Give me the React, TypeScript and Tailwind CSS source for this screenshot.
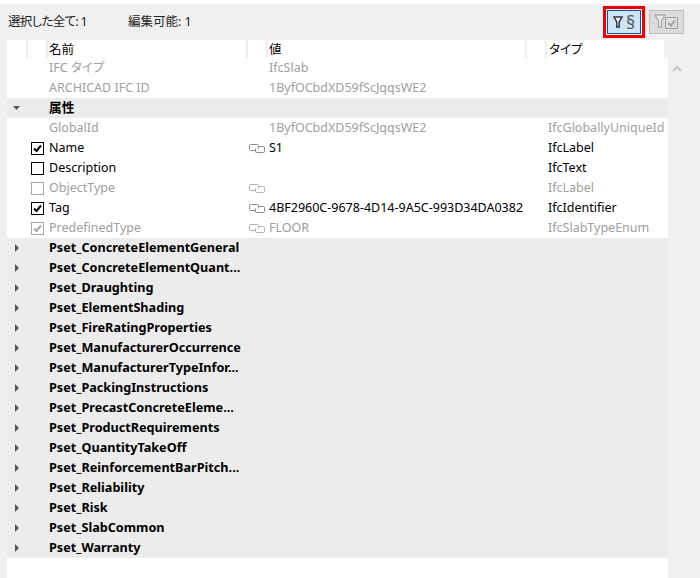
const font = "font-['Noto_Sans','Noto_Sans_CJK_JP',sans-serif]";

type Prop = {
  name: string;
  value?: string;
  type: string;
  dim?: boolean;
  check?: "on" | "off" | "none";
  link?: boolean;
};

const props: Prop[] = [
  { name: "GlobalId", value: "1ByfOCbdXD59fScJqqsWE2", type: "IfcGloballyUniqueId", dim: true },
  { name: "Name", value: "S1", type: "IfcLabel", check: "on", link: true },
  { name: "Description", type: "IfcText", check: "off" },
  { name: "ObjectType", type: "IfcLabel", check: "off", link: true, dim: true },
  { name: "Tag", value: "4BF2960C-9678-4D14-9A5C-993D34DA0382", type: "IfcIdentifier", check: "on", link: true },
  { name: "PredefinedType", value: "FLOOR", type: "IfcSlabTypeEnum", check: "on", link: true, dim: true },
];

const psets = [
  "Pset_ConcreteElementGeneral",
  "Pset_ConcreteElementQuant...",
  "Pset_Draughting",
  "Pset_ElementShading",
  "Pset_FireRatingProperties",
  "Pset_ManufacturerOccurrence",
  "Pset_ManufacturerTypeInfor...",
  "Pset_PackingInstructions",
  "Pset_PrecastConcreteEleme...",
  "Pset_ProductRequirements",
  "Pset_QuantityTakeOff",
  "Pset_ReinforcementBarPitch...",
  "Pset_Reliability",
  "Pset_Risk",
  "Pset_SlabCommon",
  "Pset_Warranty",
];

function LinkIcon({ dim }: { dim?: boolean }) {
  const c = dim ? "#b5b5b5" : "#8c8c8c";
  return (
    <svg width="16" height="9" viewBox="0 0 16 9" fill="none" stroke={c}>
      <path d="M6.5 6.5H1.5a1 1 0 0 1-1-1v-4a1 1 0 0 1 1-1h7a1 1 0 0 1 1 1v3" />
      <path d="M9.5 2.5h5a1 1 0 0 1 1 1v4a1 1 0 0 1-1 1h-7a1 1 0 0 1-1-1v-3" />
    </svg>
  );
}

function Check({ on, dim }: { on: boolean; dim?: boolean }) {
  const c = dim ? "#a8a8a8" : "#000000";
  return (
    <svg width="13" height="13" viewBox="0 0 13 13" fill="none">
      <rect x="0.5" y="0.5" width="12" height="12" stroke={c} fill="#fff" />
      {on && <path d="M3 6.5l2.5 2.5 4.5-5.5" stroke={c} strokeWidth="2" />}
    </svg>
  );
}

function Arrow({ open }: { open?: boolean }) {
  return (
    <svg width="8" height="8" viewBox="0 0 8 8" fill="#555">
      {open ? <path d="M0 2h7L3.5 6z" /> : <path d="M2 0v8l4-4z" />}
    </svg>
  );
}

function GroupRow({ label, open }: { label: string; open?: boolean }) {
  return (
    <div className="flex h-5 items-center bg-[#ececec]">
      <div className="flex w-[20px] justify-center">
        <Arrow open={open} />
      </div>
      <span className="mb-[2px] ml-[22px] text-[12.65px] font-bold text-black">{label}</span>
    </div>
  );
}

function InfoRow({ name, value }: { name: string; value: string }) {
  return (
    <div className="flex h-5 items-center text-[#a0a0a0]">
      <span className="ml-[42px] w-[220px]">{name}</span>
      <span>{value}</span>
    </div>
  );
}

function PropRow({ p }: { p: Prop }) {
  const text = p.dim ? "text-[#a0a0a0]" : "text-black";
  return (
    <div className={`flex h-5 items-center ${text}`}>
      <div className="flex w-[42px] justify-end pr-[5px]">
        {p.check && <Check on={p.check === "on"} dim={p.dim} />}
      </div>
      <span className="w-[200px]">{p.name}</span>
      <div className="flex w-[20px]">{p.link && <LinkIcon dim={p.dim} />}</div>
      <span className="w-[279px]">{p.value}</span>
      <span>{p.type}</span>
    </div>
  );
}

export default function App() {
  return (
    <div className={`h-[578px] w-[700px] overflow-hidden bg-white pt-1 text-[12.5px] leading-5 [font-feature-settings:'palt'] ${font}`}>
      <div className="h-full bg-[#f0f0f0]">
        <div className="flex h-9 items-center pl-2 pr-4 text-[#222]">
          <span className="w-[120px] tracking-[-0.7px]">選択した全て: 1</span>
          <span>編集可能: 1</span>
          <div className="ml-auto flex items-center gap-1">
            <div className="border-[3px] border-[#f00000] p-px">
              <div className="flex h-[24px] w-[34px] items-center justify-center gap-[3px] border border-[#0b5a94] bg-[#cce4f7]">
                <svg width="10" height="12" viewBox="0 0 10 12" fill="#fff" stroke="#333" strokeWidth="1.5">
                  <path d="M1 1h8L6.2 6v5H3.8V6z" />
                </svg>
                <span className="text-[18px] leading-none text-[#555]">§</span>
              </div>
            </div>
            <div className="flex h-[24px] w-[35px] items-center justify-center border border-[#bdbdbd] bg-[#dcdcdc]">
              <svg width="27" height="16" viewBox="0 0 27 16" fill="none">
                <path d="M2 1h10L8.5 7v6h-3V7z" fill="#eee" stroke="#aaa" strokeWidth="1.3" />
                <rect x="12.5" y="3.5" width="12" height="11" stroke="#a0a0a0" />
                <path d="M15.5 9l2.5 2.5 4-5" stroke="#a0a0a0" strokeWidth="2" />
              </svg>
            </div>
          </div>
        </div>
        <div className="flex">
          <div className="ml-[7px] w-[661px]">
            <div className="flex h-[18px] w-[657px] bg-white leading-5 text-black">
              <div className="w-[21px] border-r-2 border-[#eeeeee]" />
              <div className="w-[20px] border-r-2 border-[#eeeeee]" />
              <div className="w-[200px] border-r-2 border-[#eeeeee] pl-px">名前</div>
              <div className="w-[20px] border-r-2 border-[#eeeeee]" />
              <div className="w-[259px] border-r-2 border-[#eeeeee] pl-px">値</div>
              <div className="w-[20px] border-r-2 border-[#eeeeee]" />
              <div className="pl-[2px]">タイプ</div>
            </div>
            <div className="h-[520px] bg-white">
              <InfoRow name="IFC タイプ" value="IfcSlab" />
              <InfoRow name="ARCHICAD IFC ID" value="1ByfOCbdXD59fScJqqsWE2" />
              <GroupRow label="属性" open />
              {props.map((p) => (
                <PropRow key={p.name} p={p} />
              ))}
              {psets.map((s) => (
                <GroupRow key={s} label={s} />
              ))}
            </div>
          </div>
          <div className="flex flex-1 justify-center pr-[14px] pt-[25px]">
            <svg width="10" height="7" viewBox="0 0 10 7" fill="none" stroke="#c4c4c4" strokeWidth="2" className="self-start">
              <path d="M1 6l4-4 4 4" />
            </svg>
          </div>
        </div>
      </div>
    </div>
  );
}
